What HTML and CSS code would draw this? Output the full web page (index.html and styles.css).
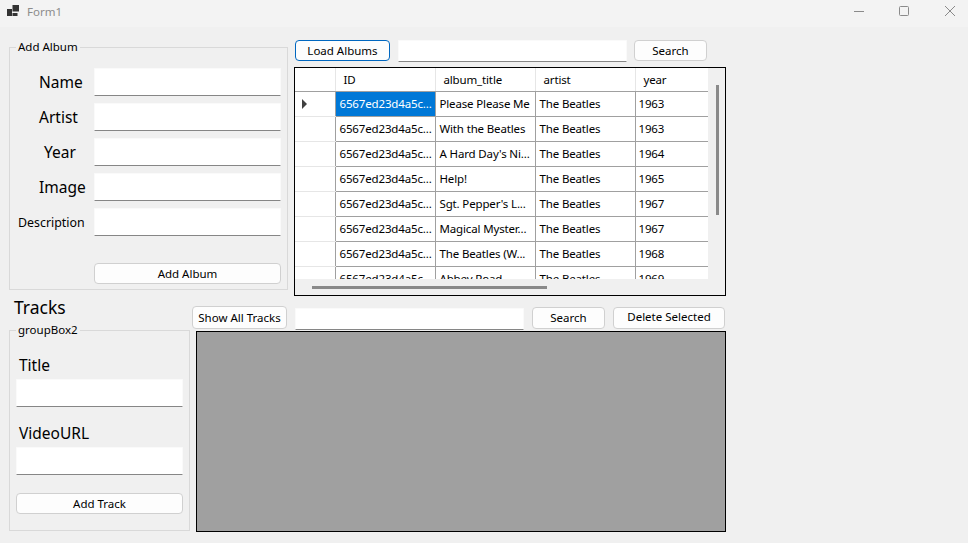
FILE: index.html
```html
<!DOCTYPE html>
<html lang="en">

<head>
    <meta charset="UTF-8">
    <title>Form1</title>
    <link rel="stylesheet" href="styles.css">
</head>

<body>
    <div class="titlebar">
        <svg class="app-icon" width="13" height="12" viewBox="0 0 13 12">
            <path d="M0 4h5v7H0zM5.500 0H12v6.500H5.500zM5.500 8H10.500v3H5.500z" fill="#333" />
        </svg>
        <span class="window-title">Form1</span>
        <div class="window-buttons">
            <svg width="46" height="27" viewBox="0 0 46 27">
                <path d="M24 11.500h10" stroke="#8a8a8a" fill="none" />
            </svg>
            <svg width="46" height="27" viewBox="0 0 46 27">
                <rect x="23.500" y="6.500" width="9" height="9" rx="1" stroke="#8a8a8a" fill="none" />
            </svg>
            <svg width="46" height="27" viewBox="0 0 46 27">
                <path d="M23 6l10 10M33 6L23 16" stroke="#8a8a8a" fill="none" />
            </svg>
        </div>
    </div>

    <div class="form">
        <div class="albums-row">
            <fieldset class="group album-group">
                <legend>Add Album</legend>
                <div class="album-field">
                    <label class="big-label name-label">Name</label>
                    <input class="textbox album-input" type="text">
                </div>
                <div class="album-field">
                    <label class="big-label name-label">Artist</label>
                    <input class="textbox album-input" type="text">
                </div>
                <div class="album-field">
                    <label class="big-label year-label">Year</label>
                    <input class="textbox album-input" type="text">
                </div>
                <div class="album-field">
                    <label class="big-label name-label">Image</label>
                    <input class="textbox album-input" type="text">
                </div>
                <div class="album-field">
                    <label class="small-label">Description</label>
                    <input class="textbox album-input" type="text">
                </div>
                <button class="btn add-album">Add Album</button>
            </fieldset>

            <div class="albums-side">
                <div class="albums-toolbar">
                    <button class="btn btn-default load-albums">Load Albums</button>
                    <input class="textbox search-input" type="text">
                    <button class="btn search-albums">Search</button>
                </div>
                <div class="grid-box">
                    <div class="grid-view">
                        <table class="albums-table">
                            <thead>
                                <tr>
                                    <th class="row-head"></th>
                                    <th>ID</th>
                                    <th>album_title</th>
                                    <th>artist</th>
                                    <th class="year-col">year</th>
                                </tr>
                            </thead>
                            <tbody>
                                <tr>
                                    <td class="row-head"><span class="row-arrow"></span></td>
                                    <td class="selected">6567ed23d4a5c...</td>
                                    <td>Please Please Me</td>
                                    <td>The Beatles</td>
                                    <td class="year-cell">1963</td>
                                </tr>
                                <tr>
                                    <td class="row-head"></td>
                                    <td>6567ed23d4a5c...</td>
                                    <td>With the Beatles</td>
                                    <td>The Beatles</td>
                                    <td class="year-cell">1963</td>
                                </tr>
                                <tr>
                                    <td class="row-head"></td>
                                    <td>6567ed23d4a5c...</td>
                                    <td>A Hard Day's Ni...</td>
                                    <td>The Beatles</td>
                                    <td class="year-cell">1964</td>
                                </tr>
                                <tr>
                                    <td class="row-head"></td>
                                    <td>6567ed23d4a5c...</td>
                                    <td>Help!</td>
                                    <td>The Beatles</td>
                                    <td class="year-cell">1965</td>
                                </tr>
                                <tr>
                                    <td class="row-head"></td>
                                    <td>6567ed23d4a5c...</td>
                                    <td>Sgt. Pepper's L...</td>
                                    <td>The Beatles</td>
                                    <td class="year-cell">1967</td>
                                </tr>
                                <tr>
                                    <td class="row-head"></td>
                                    <td>6567ed23d4a5c...</td>
                                    <td>Magical Myster...</td>
                                    <td>The Beatles</td>
                                    <td class="year-cell">1967</td>
                                </tr>
                                <tr>
                                    <td class="row-head"></td>
                                    <td>6567ed23d4a5c...</td>
                                    <td>The Beatles (W...</td>
                                    <td>The Beatles</td>
                                    <td class="year-cell">1968</td>
                                </tr>
                                <tr>
                                    <td class="row-head"></td>
                                    <td>6567ed23d4a5c...</td>
                                    <td>Abbey Road</td>
                                    <td>The Beatles</td>
                                    <td class="year-cell">1969</td>
                                </tr>
                            </tbody>
                        </table>
                    </div>
                    <div class="scroll-v"></div>
                    <div class="scroll-h"></div>
                </div>
            </div>
        </div>

        <div class="tracks-row">
            <div class="tracks-side">
                <h2 class="tracks-title">Tracks</h2>
                <fieldset class="group track-group">
                    <legend>groupBox2</legend>
                    <label class="big-label track-label">Title</label>
                    <input class="textbox track-input" type="text">
                    <label class="big-label track-label video-label">VideoURL</label>
                    <input class="textbox track-input" type="text">
                    <button class="btn add-track">Add Track</button>
                </fieldset>
            </div>

            <div class="tracks-main">
                <div class="tracks-toolbar">
                    <button class="btn show-all">Show All Tracks</button>
                    <input class="textbox search-input tracks-search" type="text">
                    <button class="btn search-tracks">Search</button>
                    <button class="btn delete-selected">Delete Selected</button>
                </div>
                <div class="tracks-panel"></div>
            </div>
        </div>
    </div>
</body>

</html>
```

FILE: styles.css
```css
html {
    background-color: #f0f0f0;
}

body {
    margin: 0;
    font-family: "Noto Sans", "Open Sans", sans-serif;
    font-size: 11.500px;
    color: #000;
    overflow: hidden;
}

/* title bar */
.titlebar {
    display: flex;
    align-items: center;
    height: 27px;
    padding-left: 7px;
    background-color: #f3f3f3;
}

.app-icon {
    margin-top: -5px;
}

.window-title {
    margin-left: 7px;
    margin-top: -5px;
    color: #8c8c8c;
}

.window-buttons {
    display: flex;
    margin-left: auto;
}

.window-buttons svg {
    display: block;
}

/* form */
.form {
    padding: 12px 0 0 9px;
}

.albums-row {
    display: flex;
    height: 258px;
}

.group {
    box-sizing: border-box;
    margin: 0;
    padding: 0;
    min-width: 0;
    border: 1px solid #d9d9d9;
}

.group legend {
    margin-left: 6px;
    padding: 0 2px;
    height: 16px;
    line-height: 16px;
}

.album-group {
    width: 279px;
    height: 251px;
    padding-top: 13px;
}

.album-field {
    display: flex;
    align-items: center;
    height: 28px;
    margin-bottom: 7px;
}

.album-field label {
    box-sizing: border-box;
    flex: none;
    width: 84px;
}

.big-label {
    font-size: 15.500px;
}

.name-label {
    padding-left: 29px;
}

.year-label {
    padding-left: 34px;
}

.small-label {
    padding-left: 8px;
    font-size: 12.400px;
}

.album-input {
    width: 187px;
    height: 28px;
}

.textbox {
    box-sizing: border-box;
    display: block;
    flex: none;
    margin: 0;
    padding: 0;
    background-color: #fff;
    border: 1px solid #fafafa;
    border-bottom: 1px solid #868686;
    border-radius: 1px;
}

.btn {
    box-sizing: border-box;
    flex: none;
    margin: 0;
    padding: 0 0 1px;
    font-family: inherit;
    font-size: 11.500px;
    color: #000;
    background-color: #fdfdfd;
    border: 1px solid #d0d0d0;
    border-radius: 4px;
}

.btn-default {
    border-color: #0067c0;
}

.add-album {
    display: block;
    width: 187px;
    height: 21px;
    margin: 27px 0 0 84px;
}

/* albums grid */
.albums-side {
    margin-left: 6px;
    margin-top: 1px;
}

.albums-toolbar {
    display: flex;
    align-items: flex-start;
    height: 27px;
    margin-left: 1px;
}

.load-albums {
    width: 95px;
    height: 21px;
}

.search-input {
    width: 229px;
    height: 22px;
    margin-left: 8px;
}

.search-albums {
    width: 73px;
    height: 21px;
    margin-left: 7px;
}

.grid-box {
    box-sizing: border-box;
    position: relative;
    width: 432px;
    height: 229px;
    border: 1px solid #000;
}

.grid-view {
    width: 413px;
    height: 211px;
    overflow: hidden;
    background-color: #fff;
}

.albums-table {
    table-layout: fixed;
    width: 413px;
    border-collapse: collapse;
    letter-spacing: -0.150px;
}

.albums-table th,
.albums-table td {
    box-sizing: border-box;
    width: 100px;
    padding: 0;
    white-space: nowrap;
    text-align: left;
}

.albums-table th {
    height: 23px;
    padding-left: 8px;
    font-weight: normal;
    border-left: 1px solid #e6e6e6;
    border-bottom: 1px solid #a0a0a0;
}

.albums-table td {
    height: 25px;
    padding-left: 4px;
    border-left: 1px solid #a0a0a0;
    border-bottom: 1px solid #a0a0a0;
}

.albums-table .row-head {
    width: 40px;
    padding: 0;
    border-left: 0;
}

.albums-table td.row-head {
    border-bottom-color: #e6e6e6;
}

.albums-table .year-col {
    width: 73px;
}

.albums-table .year-cell {
    padding-left: 3px;
}

.albums-table .selected {
    color: #fff;
    background-color: #0078d7;
}

.row-arrow {
    display: block;
    width: 0;
    height: 0;
    margin-left: 7px;
    border-top: 5px solid transparent;
    border-bottom: 5px solid transparent;
    border-left: 5px solid #404040;
}

.scroll-v {
    position: absolute;
    top: 17px;
    left: 421px;
    width: 3px;
    height: 130px;
    background-color: #8a8a8a;
}

.scroll-h {
    position: absolute;
    top: 218px;
    left: 17px;
    width: 235px;
    height: 3px;
    background-color: #8a8a8a;
}

/* tracks */
.tracks-row {
    display: flex;
}

.tracks-side {
    width: 181px;
}

.tracks-title {
    margin: 0;
    height: 25px;
    padding-left: 5px;
    font-size: 17.500px;
    font-weight: normal;
    line-height: 21px;
}

.track-group {
    width: 181px;
    height: 209px;
    padding: 16px 6px 0;
}

.track-group legend {
    margin-left: 0;
}

.track-label {
    display: block;
    height: 25px;
    padding-left: 3px;
    line-height: 22px;
}

.video-label {
    margin-top: 15px;
}

.track-input {
    width: 167px;
    height: 28px;
}

.add-track {
    display: block;
    width: 167px;
    height: 21px;
    margin-top: 18px;
}

.tracks-main {
    margin-left: 2px;
    padding-top: 9px;
}

.tracks-toolbar {
    display: flex;
    align-items: flex-start;
    height: 25px;
}

.show-all {
    width: 95px;
    height: 23px;
}

.tracks-search {
    margin-top: 2px;
}

.search-tracks {
    width: 73px;
    height: 22px;
    margin-top: 1px;
    margin-left: 8px;
}

.delete-selected {
    width: 112px;
    height: 22px;
    margin-top: 1px;
    margin-left: 8px;
    padding-bottom: 4px;
}

.tracks-panel {
    box-sizing: border-box;
    width: 530px;
    height: 201px;
    margin-left: 4px;
    background-color: #a0a0a0;
    border: 1px solid #000;
}
```
